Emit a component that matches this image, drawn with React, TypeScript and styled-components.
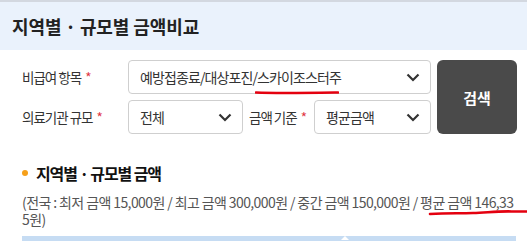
import React from 'react';
import styled, { createGlobalStyle } from 'styled-components';

const GlobalStyle = createGlobalStyle`
  body {
    margin: 0;
    background: #fff;
    font-family: 'Noto Sans CJK KR', 'Noto Sans', sans-serif;
    color: #333;
  }
`;

const Chevron = () => (
  <svg width="14" height="9" viewBox="0 0 14 9">
    <path d="M1.5 1.5 L7 7 L12.5 1.5" fill="none" stroke="#333" strokeWidth="2.2" />
  </svg>
);

const SelectBox = ({ text, width }: { text: string; width: number }) => (
  <Select style={{ width }}>
    <SelectText>{text}</SelectText>
    <Chevron />
  </Select>
);

const App = () => {
  return (
    <>
      <GlobalStyle />
      <Page>
        <Header>
          <Title>지역별 · 규모별 금액비교</Title>
        </Header>

        <Form>
          <Fields>
            <Row>
              <Label>
                비급여 항목<Star>*</Star>
              </Label>
              <SelectBox text="예방접종료/대상포진/스카이조스터주" width={303} />
            </Row>
            <Row>
              <Label>
                의료기관 규모<Star>*</Star>
              </Label>
              <SelectBox text="전체" width={115} />
              <SubLabel>
                금액 기준<Star>*</Star>
              </SubLabel>
              <SelectBox text="평균금액" width={117} />
            </Row>
          </Fields>
          <SearchButton>검색</SearchButton>
        </Form>

        <Section>
          <SectionTitle>
            <Bullet />
            지역별 · 규모별 금액
          </SectionTitle>
          <Desc>
            (전국 : 최저 금액 15,000원 / 최고 금액 300,000원 / 중간 금액 150,000원 / 평균 금액 146,335원)
          </Desc>
          <ChartBar>
            <Notch />
          </ChartBar>
        </Section>

        <Mark $left={255} $top={88} $width={84}>
          <svg width="84" height="5" viewBox="0 0 84 5">
            <path d="M1 2.5 C20 3.5 50 3 83 2.5" fill="none" stroke="#e4000f" strokeWidth="2.6" strokeLinecap="round" />
          </svg>
        </Mark>
        <Mark $left={428} $top={208} $width={99}>
          <svg width="99" height="8" viewBox="0 0 99 8">
            <path d="M2 6 C20 5 30 5.5 45 5 C60 4.5 70 3 85 3.5 L99 3.5" fill="none" stroke="#e4000f" strokeWidth="2.6" strokeLinecap="round" />
          </svg>
        </Mark>
      </Page>
    </>
  );
};

const Page = styled.div`
  position: relative;
  width: 527px;
  height: 241px;
  overflow: hidden;
`;

const Header = styled.div`
  height: 48px;
  border-top: 2px solid #d3d8e0;
  background: #eaf2fc;
  display: flex;
  align-items: center;
  padding-left: 12px;
`;

const Title = styled.h1`
  margin: 0;
  font-size: 18px;
  font-weight: 700;
  color: #222;
  letter-spacing: -0.1px;
`;

const Form = styled.div`
  display: flex;
  gap: 6px;
  padding: 10px 0 0 22px;
`;

const Fields = styled.div`
  display: flex;
  flex-direction: column;
  gap: 6px;
`;

const Row = styled.div`
  display: flex;
  align-items: center;
  height: 34px;
`;

const Label = styled.div`
  width: 106px;
  font-size: 13.5px;
  letter-spacing: -1px;
  color: #333;
`;

const SubLabel = styled.div`
  width: 65px;
  padding-left: 6px;
  font-size: 13.5px;
  letter-spacing: -1px;
  color: #333;
`;

const Star = styled.span`
  margin-left: 4px;
  color: #e0323e;
`;

const Select = styled.div`
  box-sizing: border-box;
  height: 34px;
  border: 1px solid #cfcfcf;
  border-radius: 4px;
  background: #fff;
  display: flex;
  align-items: center;
  justify-content: space-between;
  padding: 0 10px 0 11px;
`;

const SelectText = styled.span`
  font-size: 14px;
  letter-spacing: -0.9px;
  color: #333;
`;

const SearchButton = styled.button`
  width: 80px;
  height: 74px;
  border: none;
  border-radius: 6px;
  background: #4a4a4a;
  color: #fff;
  font-family: inherit;
  font-size: 15px;
  font-weight: 700;
`;

const Section = styled.div`
  padding: 27px 11px 0 22px;
`;

const SectionTitle = styled.h2`
  margin: 0;
  display: flex;
  align-items: center;
  gap: 8px;
  font-size: 16px;
  font-weight: 700;
  color: #111;
  letter-spacing: -1.1px;
`;

const Bullet = styled.span`
  width: 6px;
  height: 6px;
  border-radius: 50%;
  background: #f6a01a;
`;

const Desc = styled.p`
  margin: 9px 0 0;
  font-size: 14px;
  line-height: 17px;
  letter-spacing: -0.6px;
  word-break: break-all;
  color: #555;
`;

const ChartBar = styled.div`
  position: relative;
  margin-top: 8px;
  height: 10px;
  background: #c6dcf3;
`;

const Notch = styled.span`
  position: absolute;
  left: 319px;
  top: 0;
  border-left: 4px solid transparent;
  border-right: 4px solid transparent;
  border-bottom: 4px solid #fff;
`;

const Mark = styled.div<{ $left: number; $top: number; $width: number }>`
  position: absolute;
  left: ${p => p.$left}px;
  top: ${p => p.$top}px;
  width: ${p => p.$width}px;
  line-height: 0;
`;

export default App;
